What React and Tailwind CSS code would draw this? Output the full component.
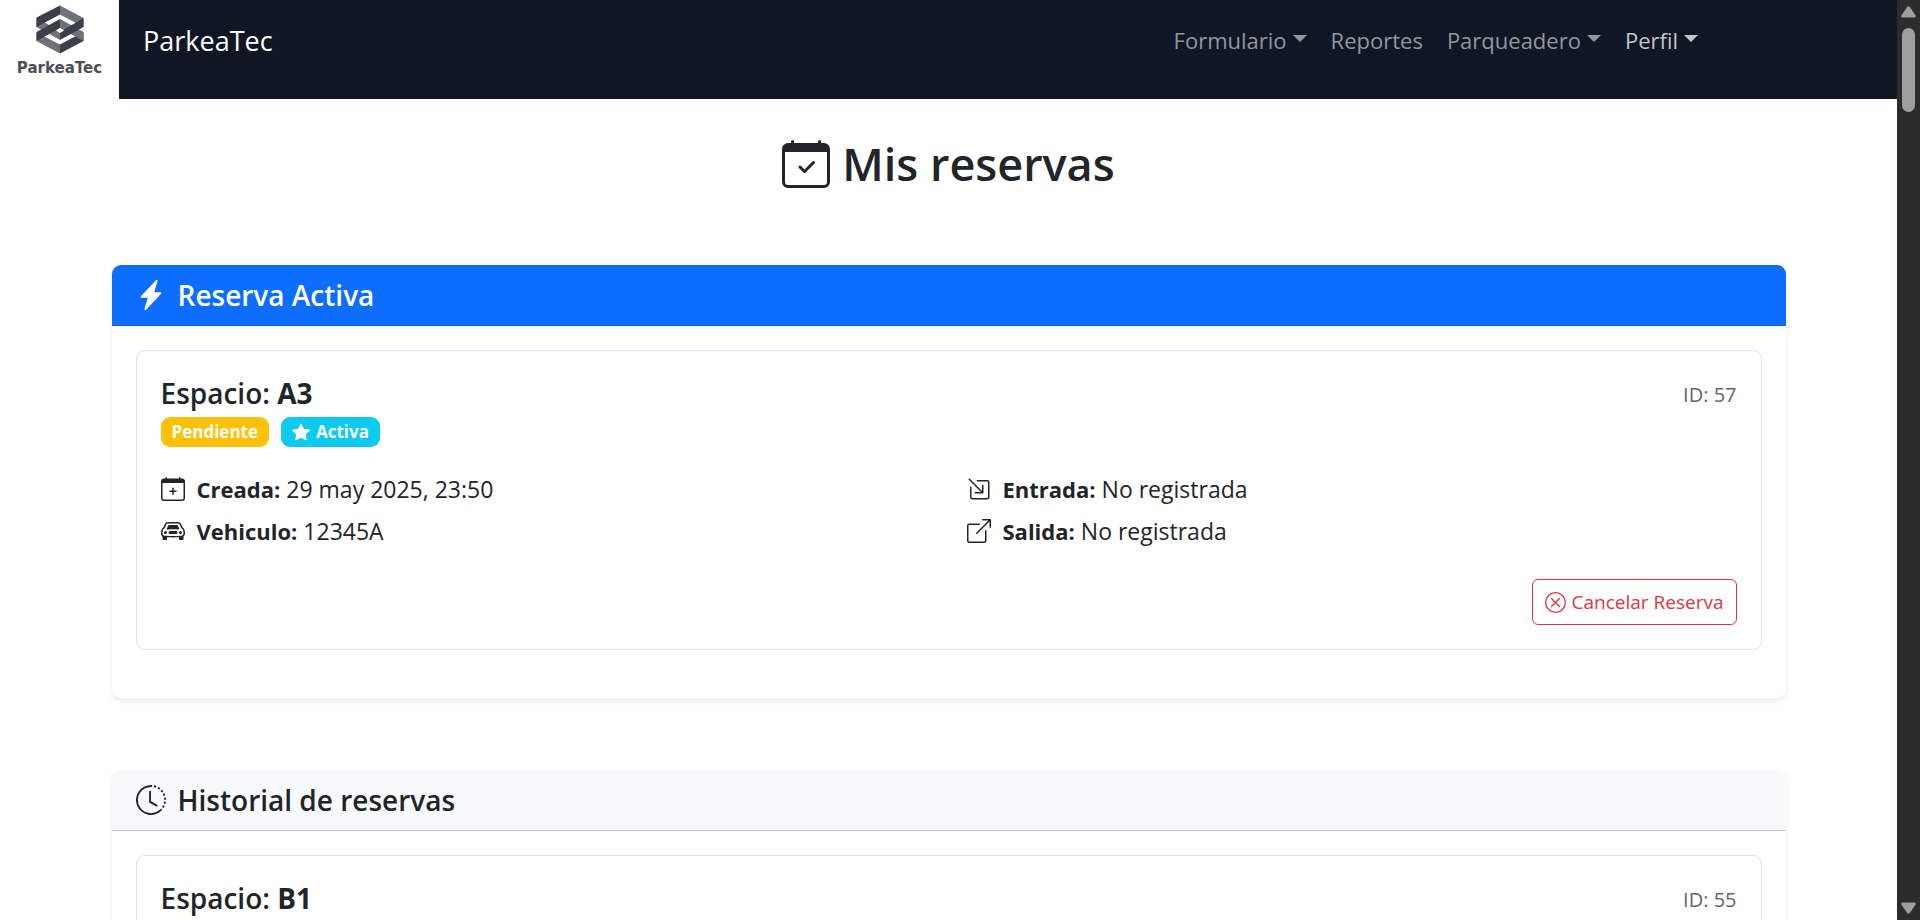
import {
  BsCalendarCheck,
  BsCalendarPlus,
  BsCarFront,
  BsBoxArrowInDownRight,
  BsBoxArrowUpRight,
  BsXCircle,
  BsClockHistory,
  BsLightningChargeFill,
  BsStarFill,
} from "react-icons/bs";

function Logo() {
  return (
    <a href="#inicio" aria-label="Inicio" className="flex w-[119px] shrink-0 flex-col items-center bg-white pt-[5px] text-[#4a4e57]">
      <svg viewBox="0 0 48 49" className="h-[49px] w-12" aria-hidden="true">
        <path fill="#6f727a" d="M0.500 13 24 26v9L0.500 22z" />
        <path fill="#3b3f49" d="M0.500 12.500 24 0.500v9L0.500 22z" />
        <path fill="#6f727a" d="M24 0.500 47.500 13v9L24 9.500z" />
        <path fill="#6f727a" d="M0.500 27.500 24 39.500v9L0.500 36z" />
        <path fill="#3b3f49" d="M24 39.500 47.500 27v9L24 48.500z" />
        <path fill="#6f727a" d="M24 14 47.500 27v9L24 23z" />
        <path fill="#3b3f49" d="M0.500 27 24 14v9L0.500 36z" />
        <path fill="#3b3f49" d="M47.500 13v9L24 35v-8z" />
        <path fill="#fff" d="M24 23.500 28 25.500 24 28 20 25.500z" />
      </svg>
      <span className="font-['DejaVu_Sans'] text-[15px] font-bold leading-[28px]">ParkeaTec</span>
    </a>
  );
}

function Caret() {
  return <span aria-hidden="true" className="mb-1 border-x-[7px] border-t-[7px] border-x-transparent border-t-current" />;
}

function NavMenu({ label, active }) {
  return (
    <button
      type="button"
      aria-haspopup="menu"
      className={active ? "flex items-center gap-[6px] text-[#c3c5c9]" : "flex items-center gap-[6px] text-[#93969d]"}
    >
      {label}
      <Caret />
    </button>
  );
}

function Navbar() {
  return (
    <header className="flex h-[99px] bg-[#0f1624]">
      <Logo />
      <nav className="flex flex-1 items-start justify-between pr-[199px] pl-6 pt-[18px]">
        <a href="#inicio" className="text-[27px] leading-[45px] text-white">ParkeaTec</a>
        <div className="flex items-center gap-6 text-[22px] leading-[45px]">
          <NavMenu label="Formulario" />
          <a href="#reportes" className="text-[#93969d]">Reportes</a>
          <NavMenu label="Parqueadero" />
          <NavMenu label="Perfil" active />
        </div>
      </nav>
    </header>
  );
}

function Section({ icon: Icon, title, primary, children }) {
  return (
    <section className="rounded-[9px] bg-white shadow-[0_3px_6px_rgba(0,0,0,0.075)]">
      <h2
        className={
          primary
            ? "flex items-center gap-3 rounded-t-[9px] border-b border-[#0b5ed7] bg-[#0d6efd] px-6 py-3 text-[28px] font-semibold leading-9 text-white"
            : "flex items-center gap-3 rounded-t-[9px] border-b border-[#c8cbd0] bg-[#f8f9fa] px-6 py-3 text-[28px] font-semibold leading-9"
        }
      >
        <Icon className="size-[30px]" />
        {title}
      </h2>
      <div className="px-6 pt-6 pb-12">{children}</div>
    </section>
  );
}

function Detail({ icon: Icon, label, value }) {
  return (
    <div className="flex items-center">
      <Icon className="mr-3 size-6" />
      <dt className="mr-[6px] text-[22px] font-bold">{label}</dt>
      <dd className="text-[23px]">{value}</dd>
    </div>
  );
}

function Reservation({ space, id, badges, details, cancel }) {
  return (
    <article className="rounded-[9px] border border-[#dee2e6] p-6">
      <div className="flex items-start justify-between">
        <h3 className="text-[28px] font-semibold leading-9">
          Espacio: <strong className="font-bold">{space}</strong>
        </h3>
        <span className="text-xl leading-10 text-[#61676d]">ID: {id}</span>
      </div>
      <div className="mt-[2px] flex gap-3">{badges}</div>
      <dl className="mt-6 grid grid-cols-2 gap-x-9 gap-y-[6px] leading-9">{details}</dl>
      {cancel && (
        <div className="mt-[30px] flex justify-end">
          <button type="button" className="flex items-center gap-[6px] rounded-md border border-[#dc3545] px-3 text-[19px] leading-[44px] text-[#dc3545]">
            <BsXCircle className="size-[21px]" />
            Cancelar Reserva
          </button>
        </div>
      )}
    </article>
  );
}

function Badge({ info, children }) {
  return (
    <span
      className={
        info
          ? "flex items-center gap-[6px] rounded-[9px] bg-[#0dcaf0] px-[11px] text-[17px] font-bold leading-[30px] text-white"
          : "flex items-center rounded-[9px] bg-[#ffc107] px-[11px] text-[17px] font-bold leading-[30px] text-white"
      }
    >
      {children}
    </span>
  );
}

function ScrollRail() {
  return (
    <div aria-hidden="true" className="flex w-[23px] shrink-0 flex-col items-center bg-[#2c2c2c] py-[6px]">
      <svg viewBox="0 0 15 12" className="h-3 w-[15px] fill-[#9f9f9f]">
        <path d="M6 1.300q1.500-2 3 0l5.500 8q.8 2.200-1 2.200h-12q-1.800 0-1-2.200z" />
      </svg>
      <div className="mt-[10px] h-[84px] w-[13px] rounded-full bg-[#9f9f9f]" />
      <svg viewBox="0 0 15 12" className="mt-auto h-3 w-[15px] rotate-180 fill-[#9f9f9f]">
        <path d="M6 1.300q1.500-2 3 0l5.500 8q.8 2.200-1 2.200h-12q-1.800 0-1-2.200z" />
      </svg>
    </div>
  );
}

export default function App() {
  return (
    <div className="flex h-screen overflow-hidden bg-white font-['Open_Sans',sans-serif] text-[#212529]">
      <div className="min-w-0 flex-1 overflow-hidden">
        <Navbar />
        <main className="mx-auto max-w-[1710px] px-[18px] pt-9">
          <h1 className="flex items-center justify-center gap-3 text-[45px] font-semibold leading-[58px]">
            <BsCalendarCheck className="size-12" />
            Mis reservas
          </h1>
          <div className="mt-[72px] flex flex-col gap-[72px]">
            <Section icon={BsLightningChargeFill} title="Reserva Activa" primary>
              <Reservation
                space="A3"
                id="57"
                cancel
                badges={
                  <>
                    <Badge>Pendiente</Badge>
                    <Badge info>
                      <BsStarFill className="size-[18px]" />
                      Activa
                    </Badge>
                  </>
                }
                details={
                  <>
                    <Detail icon={BsCalendarPlus} label="Creada:" value="29 may 2025, 23:50" />
                    <Detail icon={BsBoxArrowInDownRight} label="Entrada:" value="No registrada" />
                    <Detail icon={BsCarFront} label="Vehiculo:" value="12345A" />
                    <Detail icon={BsBoxArrowUpRight} label="Salida:" value="No registrada" />
                  </>
                }
              />
            </Section>
            <Section icon={BsClockHistory} title="Historial de reservas">
              <Reservation space="B1" id="55" />
            </Section>
          </div>
        </main>
      </div>
      <ScrollRail />
    </div>
  );
}
